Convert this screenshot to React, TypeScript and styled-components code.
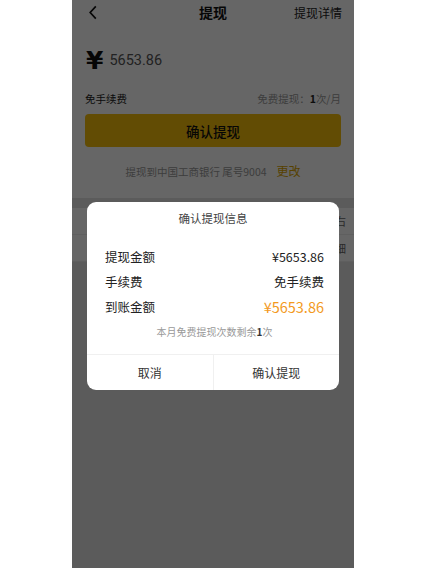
import React from "react";
import styled, { createGlobalStyle } from "styled-components";

const GlobalStyle = createGlobalStyle`
  html, body {
    margin: 0;
    padding: 0;
    background: #ffffff;
    font-family: "Noto Sans CJK SC", "Noto Sans", sans-serif;
  }
`;

// rows behind the dialog: only their right ends peek out
const infoRows = ["左右", "明细"];

const App = () => {
  return (
    <>
      <GlobalStyle />
      <Page>
        <Phone>
          <TopCard>
            <NavBar>
              <BackIcon viewBox="0 0 10 16">
                <path d="M8 1.5 L2 8 L8 14.5" fill="none" stroke="#111" strokeWidth="1.8" />
              </BackIcon>
              <NavTitle>提现</NavTitle>
              <NavLink>提现详情</NavLink>
            </NavBar>
            <AmountRow>
              <Yen>¥</Yen>
              <AmountValue>5653.86</AmountValue>
            </AmountRow>
            <FeeRow>
              <FeeLabel>免手续费</FeeLabel>
              <FeeHint>
                免费提现：<b>1</b>次/月
              </FeeHint>
            </FeeRow>
            <PrimaryButton>确认提现</PrimaryButton>
            <BankLine>
              提现到中国工商银行 尾号9004<ChangeLink>更改</ChangeLink>
            </BankLine>
          </TopCard>
          <InfoCard>
            {infoRows.map((value) => (
              <InfoRow key={value}>
                <InfoValue>{value}</InfoValue>
              </InfoRow>
            ))}
          </InfoCard>

          <Overlay />
          <Dialog>
            <DialogTitle>确认提现信息</DialogTitle>
            <DialogBody>
              <DetailRow>
                <span>提现金额</span>
                <span>¥5653.86</span>
              </DetailRow>
              <DetailRow>
                <span>手续费</span>
                <span>免手续费</span>
              </DetailRow>
              <DetailRow>
                <span>到账金额</span>
                <Highlight>¥5653.86</Highlight>
              </DetailRow>
              <Note>
                本月免费提现次数剩余<b>1</b>次
              </Note>
            </DialogBody>
            <DialogActions>
              <ActionButton>取消</ActionButton>
              <ActionButton $divider>确认提现</ActionButton>
            </DialogActions>
          </Dialog>
        </Phone>
      </Page>
    </>
  );
};

export default App;

const Page = styled.div`
  width: 426px;
  height: 568px;
  display: flex;
  justify-content: center;
  overflow: hidden;
`;

const Phone = styled.div`
  position: relative;
  width: 282px;
  height: 568px;
  background: #e4e4e4;
  overflow: hidden;
`;

const TopCard = styled.div`
  background: #ffffff;
  padding: 0 13px 0;
  height: 198px;
  box-sizing: border-box;
  display: flex;
  flex-direction: column;
`;

const NavBar = styled.div`
  position: relative;
  height: 24px;
  display: flex;
  align-items: center;
  justify-content: space-between;
`;

const BackIcon = styled.svg`
  width: 10px;
  height: 15px;
  margin-left: 3px;
`;

const NavTitle = styled.div`
  position: absolute;
  left: 50%;
  transform: translateX(-50%);
  font-size: 14px;
  font-weight: 700;
  color: #111;
`;

const NavLink = styled.div`
  font-size: 12px;
  color: #222;
  margin-right: -1px;
`;

const AmountRow = styled.div`
  display: flex;
  align-items: center;
  height: 30px;
  margin-top: 21px;
`;

const Yen = styled.span`
  font-family: "DejaVu Sans", sans-serif;
  font-size: 25px;
  font-weight: 700;
  color: #111;
  margin-left: 1px;
`;

const AmountValue = styled.span`
  font-family: Roboto, "Noto Sans", sans-serif;
  font-size: 14.5px;
  color: #555;
  margin-left: 6px;
  margin-top: 1px;
`;

const FeeRow = styled.div`
  display: flex;
  justify-content: space-between;
  align-items: center;
  margin-top: 14px;
  height: 18px;
  font-size: 10.5px;
`;

const FeeLabel = styled.span`
  color: #222;
`;

const FeeHint = styled.span`
  color: #999;
  b {
    color: #222;
    font-weight: 700;
  }
`;

const PrimaryButton = styled.div`
  margin-top: 7px;
  height: 33px;
  border-radius: 4px;
  background: #f5bd0c;
  color: #111;
  font-size: 13.5px;
  font-weight: 500;
  display: flex;
  align-items: center;
  justify-content: center;
`;

const BankLine = styled.div`
  margin-top: 15px;
  text-align: center;
  font-size: 10.5px;
  color: #999;
`;

const ChangeLink = styled.span`
  color: #d9a400;
  margin-left: 10px;
  font-size: 12px;
`;

const InfoCard = styled.div`
  margin-top: 10px;
  background: #ffffff;
`;

const InfoRow = styled.div`
  height: 26px;
  padding: 0 8px 0 13px;
  display: flex;
  justify-content: flex-end;
  align-items: center;
  font-size: 11px;
  color: #333;
  border-bottom: 1px solid #eee;
`;

const InfoValue = styled.span`
  color: #666;
`;

const Overlay = styled.div`
  position: absolute;
  inset: 0;
  background: rgba(0, 0, 0, 0.6);
`;

const Dialog = styled.div`
  position: absolute;
  left: 15px;
  top: 202px;
  width: 252px;
  height: 188px;
  background: #ffffff;
  border-radius: 9px;
  display: flex;
  flex-direction: column;
  overflow: hidden;
`;

const DialogTitle = styled.div`
  margin-top: 8px;
  text-align: center;
  font-size: 11.5px;
  color: #444;
`;

const DialogBody = styled.div`
  flex: 1;
  padding: 18px 15px 0 18px;
  display: flex;
  flex-direction: column;
`;

const DetailRow = styled.div`
  height: 25px;
  display: flex;
  justify-content: space-between;
  align-items: center;
  font-size: 12.5px;
  color: #222;
`;

const Highlight = styled.span`
  color: #f39a1e;
  font-size: 14.5px;
`;

const Note = styled.div`
  margin-top: 5px;
  text-align: center;
  font-size: 10px;
  color: #999;
  b {
    color: #333;
    font-weight: 700;
  }
`;

const DialogActions = styled.div`
  height: 35px;
  display: flex;
  border-top: 1px solid #f0f0f0;
`;

const ActionButton = styled.div<{ $divider?: boolean }>`
  flex: 1;
  display: flex;
  align-items: center;
  justify-content: center;
  font-size: 12px;
  color: #333;
  border-left: ${(p) => (p.$divider ? "1px solid #f0f0f0" : "none")};
`;
